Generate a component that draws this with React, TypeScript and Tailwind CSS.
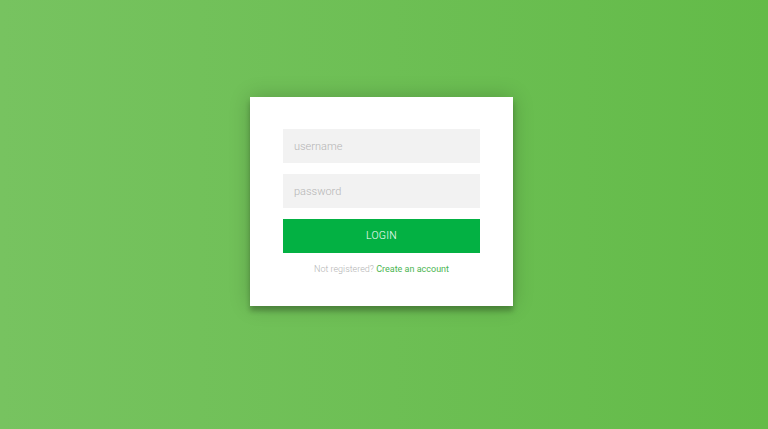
export default function App() {
  return (
    <div
      className="w-full h-[429px] flex justify-center items-start pt-[97px] pr-[5px] bg-gradient-to-r from-[#77c360] to-[#63bb48]"
      style={{ fontFamily: "Roboto, 'Liberation Sans', sans-serif" }}
    >
      <div className="w-[263px] h-[209px] bg-white px-[33px] pt-[32px] flex flex-col shadow-[0_0_20px_rgba(0,0,0,0.2),0_5px_5px_rgba(0,0,0,0.24)]">
        <input
          placeholder="username"
          className="w-full h-[34px] bg-[#f2f2f2] px-[11px] text-[11px] font-light text-[#555] placeholder:text-[#b5b5b5] outline-none"
        />
        <input
          type="password"
          placeholder="password"
          className="mt-[11px] w-full h-[34px] bg-[#f2f2f2] px-[11px] text-[11px] font-light text-[#555] placeholder:text-[#b5b5b5] outline-none"
        />
        <button className="mt-[11px] w-full h-[34px] bg-[#03b143] text-white text-[10.5px] font-light uppercase tracking-[0.2px]">
          LOGIN
        </button>
        <p className="mt-[10px] text-center text-[9px] font-light text-[#b3b3b3] leading-[12px]">
          Not registered? <span className="text-[#4cb552] font-normal">Create an account</span>
        </p>
      </div>
    </div>
  );
}
